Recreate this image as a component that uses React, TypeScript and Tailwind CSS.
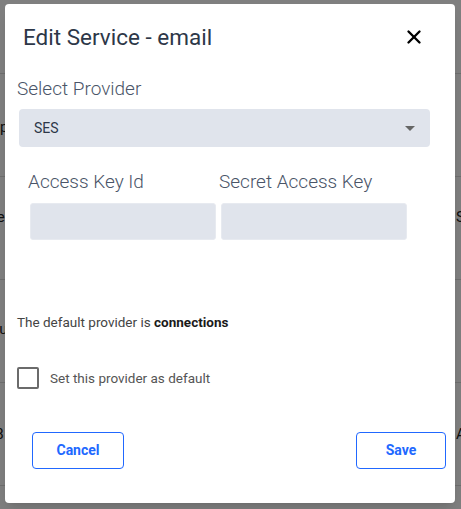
import React from 'react';
import { X } from 'lucide-react';

const rows = [
  { left: 'Setup', right: '', leftTop: 'mt-[42px]' },
  { left: 'Entre', right: 'Status', leftTop: 'mt-[29px]' },
  { left: 'Menu', right: '', leftTop: 'mt-[38px]' },
  { left: '2018', right: 'Action', leftTop: 'mt-[40px]' },
];

const Field: React.FC<{ label: string }> = ({ label }) => (
  <div className="flex flex-col w-[191px]">
    <label className="text-[19px] font-light leading-6 text-[#4a5568]">{label}</label>
    <input
      type="text"
      className="ml-[2px] mt-[9px] h-[37px] w-[186px] rounded-[3px] border border-[#e7eaf0] bg-[#e0e4ec] outline-none"
    />
  </div>
);

export default function App() {
  return (
    <div className="relative h-[509px] w-[461px] overflow-hidden bg-white font-['Roboto',sans-serif]">
      {/* page behind the dialog */}
      <div className="absolute inset-0 pt-[73px]">
        {rows.map((r) => (
          <div key={r.left} className="flex h-[103px] justify-between border-t border-[#dcdcdc] text-[15px] text-[#222]">
            <span className={`${r.leftTop} -ml-[30px]`}>{r.left}</span>
            <span className={`${r.leftTop} -mr-[38px]`}>{r.right}</span>
          </div>
        ))}
        <div className="border-t border-[#dcdcdc]" />
      </div>
      <div className="absolute inset-0 bg-black/50" />

      {/* dialog */}
      <div className="absolute left-[5px] top-[4px] flex h-[499px] w-[450px] flex-col rounded-[4px] bg-white shadow-lg">
        <div className="flex items-start justify-between pl-[18px] pr-[30px] pt-[19px]">
          <h2 className="text-[22.5px] font-normal leading-7 text-[#2d3748]">Edit Service - email</h2>
          <button className="mt-[3px] text-black">
            <X className="h-[22px] w-[22px]" strokeWidth={2.6} />
          </button>
        </div>

        <div className="ml-[12px] mt-[26px] text-[19px] font-light leading-6 text-[#4a5568]">Select Provider</div>
        <div className="ml-[14px] mt-[8px] flex h-[38px] w-[411px] items-center justify-between rounded-[4px] bg-[#e0e4ec] pl-[15px] pr-[15px]">
          <span className="text-[14px] text-[#2d3748]">SES</span>
          <svg width="10" height="5" viewBox="0 0 10 5" className="mt-[1px]">
            <path d="M0 0h10L5 5z" fill="#666" />
          </svg>
        </div>

        <div className="ml-[23px] mt-[23px] flex">
          <Field label="Access Key Id" />
          <Field label="Secret Access Key" />
        </div>

        <p className="ml-[12px] mt-[72px] text-[13.5px] leading-5 text-[#444]">
          The default provider is <span className="font-bold text-[#1a1a1a]">connections</span>
        </p>

        <label className="ml-[12px] mt-[35px] flex items-center gap-[11px]">
          <span className="h-[22px] w-[22px] rounded-[2px] border-2 border-[#6b6b6b] bg-white" />
          <span className="text-[13.5px] text-[#555]">Set this provider as default</span>
        </label>

        <div className="ml-[27px] mr-[9px] mt-[43px] flex justify-between">
          <button className="h-[37px] w-[92px] rounded-[4px] border border-[#2168ff] text-[14px] font-bold text-[#2168ff]">
            Cancel
          </button>
          <button className="h-[37px] w-[90px] rounded-[4px] border border-[#2168ff] text-[14px] font-bold text-[#2168ff]">
            Save
          </button>
        </div>
      </div>
    </div>
  );
}
